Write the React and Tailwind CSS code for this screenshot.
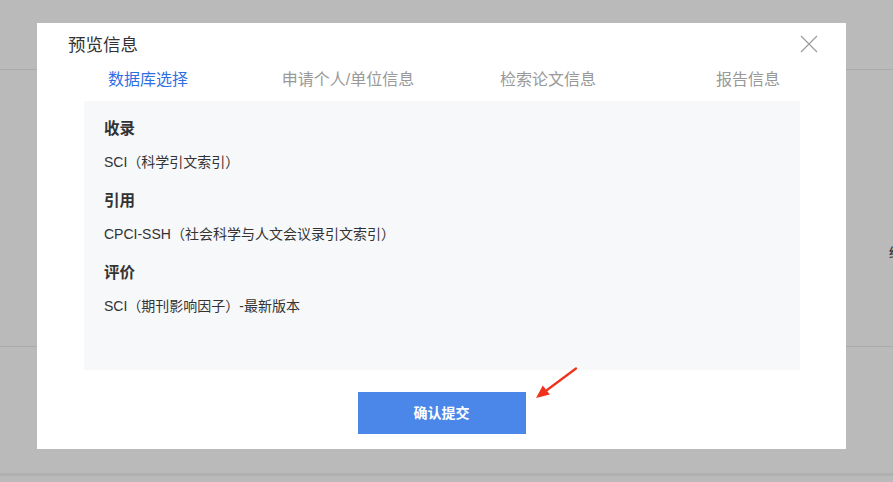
import React from "react";

const tabs = ["数据库选择", "申请个人/单位信息", "检索论文信息", "报告信息"];

const sections = [
  { title: "收录", value: "SCI（科学引文索引）" },
  { title: "引用", value: "CPCI-SSH（社会科学与人文会议录引文索引）" },
  { title: "评价", value: "SCI（期刊影响因子）-最新版本" },
];

const CloseIcon = () => (
  <svg width="18" height="18" viewBox="0 0 18 18" fill="none">
    <path d="M1 1L17 17M17 1L1 17" stroke="#9a9a9a" strokeWidth="1.1" />
  </svg>
);

const Arrow = () => (
  <svg width="44" height="34" viewBox="0 0 44 34" fill="none">
    <path d="M41 1.5L12 23" stroke="#f0311c" strokeWidth="2.2" strokeLinecap="round" />
    <path d="M1 31L7.8 18.6L14.8 27.6Z" fill="#f0311c" />
  </svg>
);

export default function App() {
  return (
    <div
      className="relative h-[482px] w-[893px] overflow-hidden bg-[#bababa]"
      style={{ fontFamily: '"Liberation Sans", "Noto Sans CJK SC", sans-serif' }}
    >
      {/* page behind the mask */}
      <div className="flex h-full flex-col">
        <div className="h-[70px] border-b border-[#aaaaaa]" />
        <div className="relative h-[277px] border-b border-[#aaaaaa]">
          <span className="absolute left-[889px] top-[176px] text-[13px] leading-none text-[#222]">
            结
          </span>
        </div>
        <div className="h-[126px]" />
        <div className="h-[3px] bg-[#b0b0b0]" />
      </div>

      {/* modal */}
      <div className="absolute left-[37px] top-[23px] flex h-[426px] w-[809px] flex-col bg-white">
        <button className="absolute right-[28px] top-[12px]">
          <CloseIcon />
        </button>

        <h3 className="pl-[31px] pt-[11px] text-[17.5px] font-normal leading-[22px] text-[#333]">
          预览信息
        </h3>

        <div className="ml-[11px] mt-[12px] grid w-[800px] grid-cols-4">
          {tabs.map((t, i) => (
            <div
              key={t}
              className={`text-center text-[16px] leading-[24px] ${
                i === 0 ? "text-[#2f6fe4]" : "text-[#999999]"
              }`}
            >
              {t}
            </div>
          ))}
        </div>

        <div className="ml-[47px] mt-[9px] h-[269px] w-[716px] bg-[#f7f8fa] pl-[20px] pt-[17px]">
          {sections.map((s, i) => (
            <div key={s.title} className={i > 0 ? "mt-[18px]" : ""}>
              <div className="text-[15.5px] font-bold leading-[22px] text-[#333]">{s.title}</div>
              <div className="mt-[12px] text-[14px] leading-[20px] text-[#333]">{s.value}</div>
            </div>
          ))}
        </div>

        <div className="mt-[22px] flex justify-center">
          <button className="h-[42px] w-[168px] bg-[#4a87e8] text-[14px] font-semibold text-white">
            确认提交
          </button>
        </div>
      </div>

      <div className="absolute left-[535px] top-[367px]">
        <Arrow />
      </div>
    </div>
  );
}
